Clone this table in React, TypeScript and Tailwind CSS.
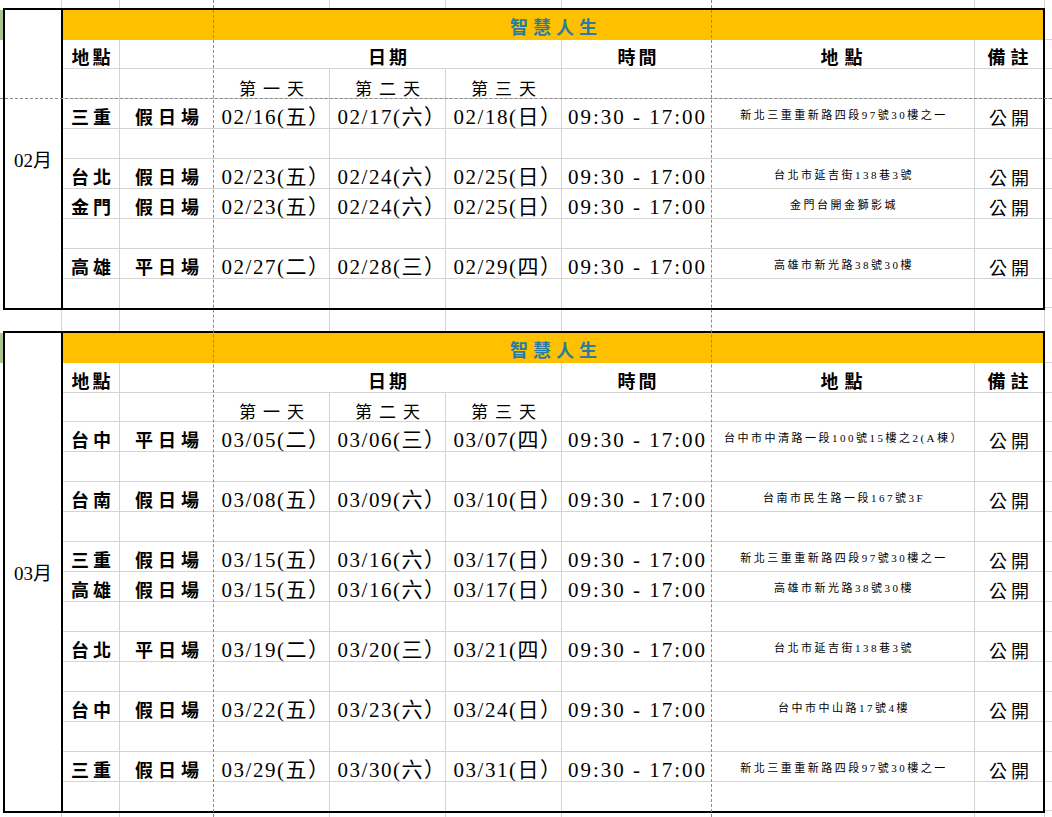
import React from "react";

type Row = {
  city: string;
  kind: string;
  days: string[];
  addr: string;
} | null;

const TIME = "09:30 - 17:00";

const febRows: Row[] = [
  { city: "三重", kind: "假日場", days: ["02/16(五）", "02/17(六）", "02/18(日）"], addr: "新北三重重新路四段97號30樓之一" },
  null,
  { city: "台北", kind: "假日場", days: ["02/23(五）", "02/24(六）", "02/25(日）"], addr: "台北市延吉街138巷3號" },
  { city: "金門", kind: "假日場", days: ["02/23(五）", "02/24(六）", "02/25(日）"], addr: "金門台開金獅影城" },
  null,
  { city: "高雄", kind: "平日場", days: ["02/27(二）", "02/28(三）", "02/29(四）"], addr: "高雄市新光路38號30樓" },
  null,
];

const marRows: Row[] = [
  { city: "台中", kind: "平日場", days: ["03/05(二）", "03/06(三）", "03/07(四）"], addr: "台中市中清路一段100號15樓之2(A棟）" },
  null,
  { city: "台南", kind: "假日場", days: ["03/08(五）", "03/09(六）", "03/10(日）"], addr: "台南市民生路一段167號3F" },
  null,
  { city: "三重", kind: "假日場", days: ["03/15(五）", "03/16(六）", "03/17(日）"], addr: "新北三重重新路四段97號30樓之一" },
  { city: "高雄", kind: "假日場", days: ["03/15(五）", "03/16(六）", "03/17(日）"], addr: "高雄市新光路38號30樓" },
  null,
  { city: "台北", kind: "平日場", days: ["03/19(二）", "03/20(三）", "03/21(四）"], addr: "台北市延吉街138巷3號" },
  null,
  { city: "台中", kind: "假日場", days: ["03/22(五）", "03/23(六）", "03/24(日）"], addr: "台中市中山路17號4樓" },
  null,
  { city: "三重", kind: "假日場", days: ["03/29(五）", "03/30(六）", "03/31(日）"], addr: "新北三重重新路四段97號30樓之一" },
  null,
];

const grid = "border-[#d4d4d4]";

// one cell of the content area; "line" draws the grey gridline on the right
const Cell: React.FC<{ w: string; line?: boolean; className?: string; children?: React.ReactNode }> = ({
  w,
  line = true,
  className = "",
  children,
}) => (
  <div
    className={`flex h-full shrink-0 items-end justify-center leading-none whitespace-nowrap ${w} ${
      line ? `border-r ${grid}` : ""
    } ${className}`}
  >
    {children}
  </div>
);

const DataRow: React.FC<{ row: Row; last: boolean }> = ({ row, last }) => (
  <div className={`flex ${last ? "h-[29px]" : `h-[30px] border-b ${grid}`}`}>
    <Cell w="w-[57px]" className="text-[18px] font-bold tracking-[4px] pl-[4px] pb-[1px]">
      {row?.city}
    </Cell>
    <Cell w="w-[94px]" line={false} className="text-[18px] font-bold tracking-[5px] pl-[5px] pb-[1px]">
      {row?.kind}
    </Cell>
    {[0, 1, 2].map((i) => (
      <Cell key={i} w="w-[116px]" className="text-[21px] tracking-[1.5px] pl-[9px]">
        {row?.days[i]}
      </Cell>
    ))}
    <Cell w="w-[150px]" line={false} className="text-[21px] tracking-[2px] pl-[1px]">
      {row ? TIME : ""}
    </Cell>
    <Cell w="w-[263px]" className="!items-center pt-[3px] text-[11px] tracking-[2.5px] pl-[2px]">
      {row?.addr}
    </Cell>
    <Cell w="w-[68px]" line={false} className="text-[18px] tracking-[4px] pl-[4px]">
      {row ? "公開" : ""}
    </Cell>
  </div>
);

const Block: React.FC<{ month: string; rows: Row[]; headH: string; dayH: string; heights: number[] }> = ({
  month,
  rows,
  headH,
  dayH,
  heights,
}) => (
  <div className="flex">
    <div className="flex w-[3px] flex-col pt-[2px]">
      <div className="h-[30px] bg-[#a9c48f]" />
    </div>
    <div className="flex w-[1042px] border-2 border-black">
      <div className="flex w-[58px] items-center justify-center border-r-2 border-black pt-[3px] text-[19px] leading-none">
        {month}
      </div>
      <div className="flex flex-1 flex-col">
        <div className="flex h-[30px] items-end justify-center bg-[#ffc000] pb-[3px] pl-[6px] text-[18px] font-bold leading-none tracking-[5px] text-[#2b7ca3]">
          智慧人生
        </div>
        <div className={`flex ${headH} border-b ${grid} text-[18px] font-bold tracking-[3px]`}>
          <Cell w="w-[57px]" className="pl-[3px] pb-[1px]">地點</Cell>
          <Cell w="w-[94px]" line={false} />
          <Cell w="w-[348px]" className="pl-[3px] pb-[1px]">日期</Cell>
          <Cell w="w-[150px]" line={false} className="pl-[3px] pb-[1px]">時間</Cell>
          <Cell w="w-[263px]" className="pl-[3px] pb-[1px] tracking-[6px]">地點</Cell>
          <Cell w="w-[68px]" line={false} className="pl-[3px] pb-[1px] tracking-[5px]">備註</Cell>
        </div>
        <div className={`flex ${dayH} border-b ${grid} text-[17px] tracking-[7px]`}>
          <Cell w="w-[57px]" />
          <Cell w="w-[94px]" line={false} />
          <Cell w="w-[116px]" className="pl-[7px]">第一天</Cell>
          <Cell w="w-[116px]" className="pl-[7px]">第二天</Cell>
          <Cell w="w-[116px]" className="pl-[7px]">第三天</Cell>
          <Cell w="w-[150px]" line={false} />
          <Cell w="w-[263px]" />
          <Cell w="w-[68px]" line={false} />
        </div>
        {rows.map((row, i) => (
          <DataRow key={i} row={row} last={i === rows.length - 1} />
        ))}
      </div>
    </div>
    <div className="flex w-[7px] flex-col pt-[2px]">
      {heights.map((h, i) => (
        <div key={i} className={`shrink-0 border-b ${grid}`} style={{ height: h }} />
      ))}
    </div>
  </div>
);

// rows outside the framed blocks, grey gridlines only
const Strip: React.FC<{ h: string }> = ({ h }) => (
  <div className={`flex ${h}`}>
    {[
      ["w-[62px]", true],
      ["w-[58px]", true],
      ["w-[94px]", false],
      ["w-[116px]", true],
      ["w-[116px]", true],
      ["w-[116px]", true],
      ["w-[150px]", false],
      ["w-[263px]", true],
      ["w-[70px]", true],
    ].map(([w, line], i) => (
      <div key={i} className={`h-full shrink-0 ${w} ${line ? `border-r ${grid}` : ""}`} />
    ))}
  </div>
);

export default function App() {
  const febHeights = [30, 29, 30, 30, 30, 30, 30, 30, 30, 29];
  const marHeights = [30, 30, 29, ...Array(12).fill(30), 29];
  return (
    <div className="relative h-[817px] w-[1052px] overflow-hidden bg-white text-black font-['Liberation_Serif','Noto_Sans_CJK_TC',serif]">
      <Strip h="h-[8px]" />
      <Block month="02月" rows={febRows} headH="h-[29px]" dayH="h-[30px]" heights={febHeights} />
      <Strip h="h-[21px]" />
      <Block month="03月" rows={marRows} headH="h-[30px]" dayH="h-[29px]" heights={marHeights} />
      <Strip h="h-[4px]" />

      {/* page-break markers */}
      <div className="pointer-events-none absolute top-0 bottom-0 left-[213px] border-l border-dashed border-[#8a8a8a]" />
      <div className="pointer-events-none absolute top-0 bottom-0 left-[711px] border-l border-dashed border-[#8a8a8a]" />
      <div className="pointer-events-none absolute left-0 right-0 top-[98px] border-t border-dashed border-[#8a8a8a]" />
    </div>
  );
}
